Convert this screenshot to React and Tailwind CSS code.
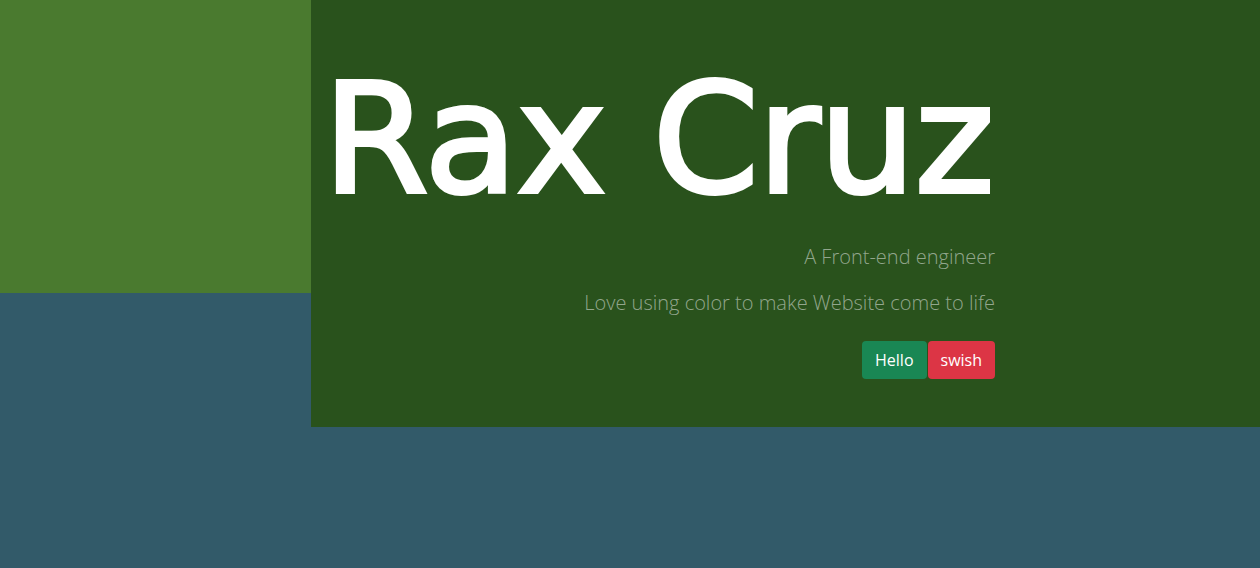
import React from 'react';

export default function App() {
  return (
    <div className="w-[1260px] h-[568px] bg-[#325a69] flex items-start overflow-hidden">
      {/* left block */}
      <div className="w-[311px] h-[293px] bg-[#4a7a2f] shrink-0" />

      {/* hero panel */}
      <div className="flex-1 h-[427px] bg-[#29521c]">
        <div className="w-[684px] pl-[12px] flex flex-col items-end">
          <h1
            className="self-start whitespace-nowrap mt-[64px] text-white text-[152px] leading-none tracking-[-1px] [-webkit-text-stroke:4px_white]"
            style={{ fontFamily: '"DejaVu Sans", sans-serif' }}
          >
            Rax Cruz
          </h1>
          <div
            className="mt-[26px] flex flex-col items-end text-[20px] leading-[30px] font-light text-[#92a68c]"
            style={{ fontFamily: '"Open Sans", sans-serif' }}
          >
            <p className="mb-4">A Front-end engineer</p>
            <p className="mb-4">Love using color to make Website come to life</p>
          </div>
          <div
            className="flex gap-px mt-[7px] text-[16px] text-white"
            style={{ fontFamily: '"Open Sans", sans-serif' }}
          >
            <button className="bg-[#198754] rounded-[4px] px-[13px] h-[38px]">Hello</button>
            <button className="bg-[#dc3545] rounded-[4px] px-[13px] h-[38px]">swish</button>
          </div>
        </div>
      </div>
    </div>
  );
}
